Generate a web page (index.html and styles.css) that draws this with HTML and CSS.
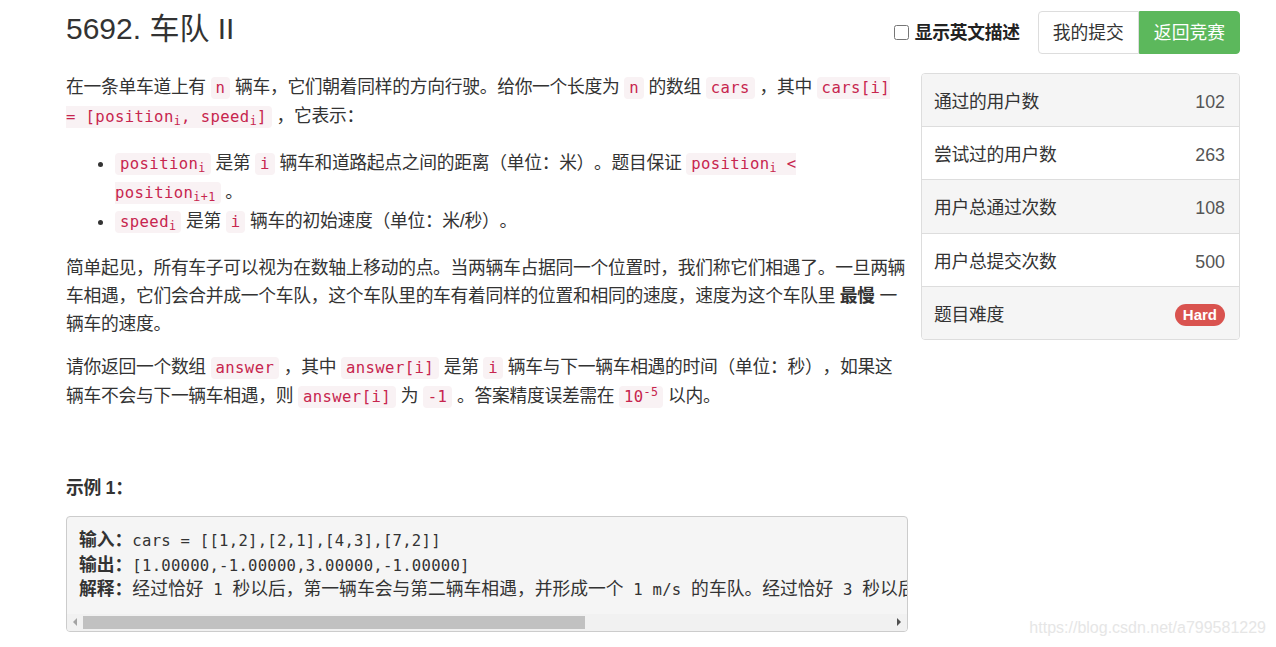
FILE: index.html
```html
<!DOCTYPE html>
<html lang="zh-CN">
<head>
    <meta charset="UTF-8">
    <title>5692. 车队 II</title>
    <link rel="stylesheet" href="styles.css">
</head>
<body>
    <div class="page">
        <div class="header">
            <h1 class="title">5692. 车队 II</h1>
            <div class="actions">
                <label class="lang-toggle"><input type="checkbox">显示英文描述</label>
                <div class="btn-group">
                    <button class="btn btn-default">我的提交</button>
                    <button class="btn btn-success">返回竞赛</button>
                </div>
            </div>
        </div>

        <div class="main">
            <div class="question">
                <p>在一条单车道上有 <code>n</code> 辆车，它们朝着同样的方向行驶。给你一个长度为 <code>n</code> 的数组 <code>cars</code> ，其中 <code>cars[i] = [position<sub>i</sub>, speed<sub>i</sub>]</code> ，它表示：</p>
                <ul>
                    <li><code>position<sub>i</sub></code> 是第 <code>i</code> 辆车和道路起点之间的距离（单位：米）。题目保证 <code>position<sub>i</sub> &lt; position<sub>i+1</sub></code> 。</li>
                    <li><code>speed<sub>i</sub></code> 是第 <code>i</code> 辆车的初始速度（单位：米/秒）。</li>
                </ul>
                <p>简单起见，所有车子可以视为在数轴上移动的点。当两辆车占据同一个位置时，我们称它们相遇了。一旦两辆车相遇，它们会合并成一个车队，这个车队里的车有着同样的位置和相同的速度，速度为这个车队里 <strong>最慢</strong> 一辆车的速度。</p>
                <p>请你返回一个数组 <code>answer</code> ，其中 <code>answer[i]</code> 是第 <code>i</code> 辆车与下一辆车相遇的时间（单位：秒），如果这辆车不会与下一辆车相遇，则 <code>answer[i]</code> 为 <code>-1</code> 。答案精度误差需在 <code>10<sup>-5</sup></code> 以内。</p>

                <p class="example-title"><strong>示例 1：</strong></p>
                <div class="example">
<pre><strong class="cjk">输入：</strong>cars = [[1,2],[2,1],[4,3],[7,2]]
<strong class="cjk">输出：</strong>[1.00000,-1.00000,3.00000,-1.00000]
<strong class="cjk">解释：</strong><span class="cjk">经过恰好</span> 1 <span class="cjk">秒以后，第一辆车会与第二辆车相遇，并形成一个</span> 1 m/s <span class="cjk">的车队。经过恰好</span> 3 <span class="cjk">秒以后，第三辆车会与第四辆车相遇，并形成一个</span> 2 m/s <span class="cjk">的车队。</span></pre>
                    <div class="scrollbar">
                        <span class="scroll-btn"><i class="arrow-left"></i></span>
                        <span class="scroll-thumb"></span>
                        <span class="scroll-track"></span>
                        <span class="scroll-btn"><i class="arrow-right"></i></span>
                    </div>
                </div>
            </div>

            <div class="side">
                <ul class="stats">
                    <li><span>通过的用户数</span><span class="num">102</span></li>
                    <li><span>尝试过的用户数</span><span class="num">263</span></li>
                    <li><span>用户总通过次数</span><span class="num">108</span></li>
                    <li><span>用户总提交次数</span><span class="num">500</span></li>
                    <li><span>题目难度</span><span class="label-danger">Hard</span></li>
                </ul>
            </div>
        </div>
    </div>
    <div class="watermark">https://blog.csdn.net/a799581229</div>
</body>
</html>
```

FILE: styles.css
```css
body {
    margin: 0;
    font-family: "Liberation Sans", "Noto Sans CJK SC", sans-serif;
    font-size: 17.8px;
    line-height: 28px;
    letter-spacing: -0.3px;
    text-spacing-trim: space-all;
    color: #333;
    background: #fff;
}

.page {
    padding: 0 36px 0 66px;
}

/* header */
.header {
    display: flex;
    justify-content: space-between;
    align-items: flex-start;
    height: 73px;
    padding-top: 11px;
    box-sizing: border-box;
}

.title {
    margin: 0;
    font-size: 30px;
    line-height: 36px;
    font-weight: 400;
    letter-spacing: 0;
    color: #333;
}

.actions {
    display: flex;
    align-items: center;
    gap: 18px;
}

.lang-toggle {
    display: flex;
    align-items: center;
    font-weight: bold;
    color: #222;
    cursor: pointer;
}

.lang-toggle input {
    width: 15px;
    height: 15px;
    margin: 0 6px 0 0;
}

.btn-group {
    display: flex;
}

.btn {
    font-family: inherit;
    font-size: 17.8px;
    line-height: 24px;
    letter-spacing: 0;
    padding: 9px 14px 8px;
    border: 1px solid #ddd;
    background: #fff;
    color: #333;
    cursor: pointer;
}

.btn-default {
    border-radius: 4px 0 0 4px;
}

.btn-success {
    background: #5cb85c;
    border-color: #5cb85c;
    color: #fff;
    border-radius: 0 4px 4px 0;
}

/* main */
.main {
    display: grid;
    grid-template-columns: 842px 319px;
    column-gap: 13px;
    align-items: start;
}

.question p {
    margin: 0 0 15px;
}

.question ul {
    margin: 18px 0 18px;
    padding-left: 49px;
}

code {
    font-family: "DejaVu Sans Mono", monospace;
    font-size: 15.6px;
    letter-spacing: 0.4px;
    color: #c7254e;
    background: #f9f2f4;
    padding: 2px 5px;
    border-radius: 4px;
}

sub, sup {
    font-size: 75%;
    line-height: 0;
    position: relative;
    vertical-align: baseline;
}

sub {
    bottom: -0.25em;
}

sup {
    top: -0.5em;
}

.question .example-title {
    margin: 63px 0 14px;
}

/* example block */
.example {
    border: 1px solid #ccc;
    border-radius: 4px;
    background: #f5f5f5;
    overflow: hidden;
}

.example pre {
    margin: 0;
    padding: 12px 12px 11px;
    font-family: "DejaVu Sans Mono", monospace;
    font-size: 15.6px;
    line-height: 24.5px;
    letter-spacing: 0.25px;
    color: #333;
    white-space: pre;
    overflow: hidden;
}

.example .cjk {
    font-family: "Noto Sans CJK SC", sans-serif;
    font-size: 17.8px;
    line-height: 0;
    letter-spacing: 0;
}

.scrollbar {
    display: flex;
    align-items: center;
    height: 17px;
    background: #f1f1f1;
}

.scroll-btn {
    width: 16px;
    height: 17px;
    display: flex;
    align-items: center;
    justify-content: center;
}

.arrow-left {
    border-right: 4px solid #a3a3a3;
    border-top: 4px solid transparent;
    border-bottom: 4px solid transparent;
}

.arrow-right {
    border-left: 4px solid #505050;
    border-top: 4px solid transparent;
    border-bottom: 4px solid transparent;
}

.scroll-thumb {
    width: 502px;
    height: 13px;
    background: #c1c1c1;
}

.scroll-track {
    flex: 1;
}

/* side stats */
.stats {
    list-style: none;
    margin: 0;
    padding: 0;
    border: 1px solid #ddd;
    border-radius: 4px;
    overflow: hidden;
}

.stats li {
    display: flex;
    justify-content: space-between;
    align-items: center;
    box-sizing: border-box;
    height: 52.2px;
    padding: 4px 14px 0 12px;
    background: #fff;
}

.stats li + li {
    border-top: 1px solid #ddd;
    height: 53.2px;
}

.stats li:nth-child(odd) {
    background: #f5f5f5;
}

.stats .num {
    color: #555;
    letter-spacing: 0;
}

.label-danger {
    background: #d9534f;
    color: #fff;
    font-weight: bold;
    font-size: 15px;
    line-height: 22px;
    letter-spacing: 0;
    padding: 0 8px;
    border-radius: 11px;
}

.watermark {
    position: absolute;
    right: 10px;
    bottom: 5px;
    font-family: "Liberation Sans", sans-serif;
    font-size: 16px;
    letter-spacing: 0;
    color: #e6e6e6;
}
```
